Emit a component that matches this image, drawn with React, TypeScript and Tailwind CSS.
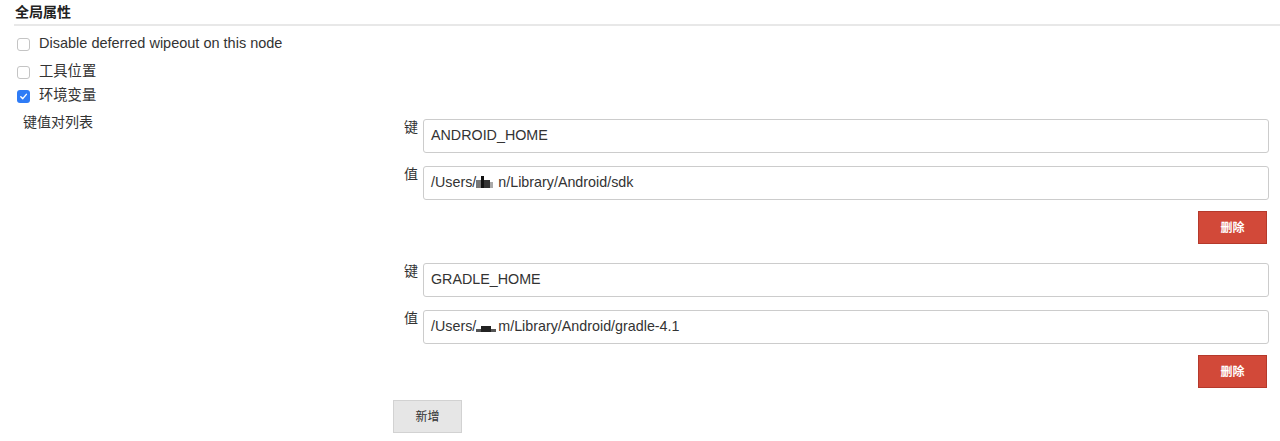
const font = { fontFamily: '"Liberation Sans", "Noto Sans CJK SC", sans-serif' };

const Checkbox = ({ checked }: { checked?: boolean }) =>
    checked ? (
        <span className="inline-flex items-center justify-center w-[13px] h-[13px] rounded-[3px] bg-[#2f7cf6]">
            <svg width="9" height="9" viewBox="0 0 10 10" fill="none">
                <path d="M2 5.2 L4.2 7.4 L8.2 2.6" stroke="white" strokeWidth="1.6" strokeLinecap="round" strokeLinejoin="round" />
            </svg>
        </span>
    ) : (
        <span className="inline-block w-[13px] h-[13px] rounded-[3px] border border-[#c4c4c4] bg-white" />
    );

const Redacted = ({ wide }: { wide?: boolean }) =>
    wide ? (
        <span className="inline-flex items-end h-[12px] w-[20px] mr-[2px] align-[-1px]">
            <span className="w-[5px] h-[3px] bg-[#555]" />
            <span className="w-[10px] h-[6px] bg-[#222]" />
            <span className="w-[5px] h-[3px] bg-[#555]" />
        </span>
    ) : (
        <span className="inline-flex items-end h-[12px] w-[20px] mr-[2px] align-[-1px]">
            <span className="w-[5px] h-[8px] bg-[#777]" />
            <span className="w-[3px] h-[12px] bg-[#111]" />
            <span className="w-[6px] h-[8px] bg-[#333]" />
            <span className="w-[3px] h-[6px] bg-[#aaa]" />
        </span>
    );

const Field = ({ label, children }: { label: string; children: React.ReactNode }) => (
    <div className="flex">
        <div className="w-[30px] pr-[5px] text-right text-[14px] leading-[16px] text-[#333]">{label}</div>
        <div className="flex-1 h-[34px] border border-[#ccc] rounded-[3px] bg-white px-[7px] flex items-center text-[14.3px] text-[#333]">
            {children}
        </div>
    </div>
);

const Entry = ({ name, value }: { name: string; value: React.ReactNode }) => (
    <div className="flex flex-col">
        <Field label="键">{name}</Field>
        <div className="mt-[13px]">
            <Field label="值">{value}</Field>
        </div>
        <div className="flex justify-end mt-[11px] pr-[2px]">
            <button className="w-[69px] h-[33px] bg-[#d24939] border border-[#b5392b] text-white text-[12px] font-bold">
                删除
            </button>
        </div>
    </div>
);

export default function App() {
    return (
        <div className="w-[1280px] h-[441px] bg-white overflow-hidden" style={font}>
            <div className="ml-[14px] h-[26px] border-b-2 border-[#e8e8e8]">
                <div className="pl-[1px] text-[14px] leading-[24px] font-bold text-[#222]">全局属性</div>
            </div>

            <div className="flex items-center h-[20px] mt-[8px] pl-[17px] gap-[9px] text-[14.5px] text-[#333]">
                <Checkbox />
                <span>Disable deferred wipeout on this node</span>
            </div>
            <div className="flex items-center h-[20px] mt-[8px] pl-[17px] gap-[9px] text-[14.3px] text-[#333]">
                <Checkbox />
                <span>工具位置</span>
            </div>
            <div className="flex items-center h-[20px] mt-[4px] pl-[17px] gap-[9px] text-[14.3px] text-[#333]">
                <Checkbox checked />
                <span>环境变量</span>
            </div>

            <div className="flex mt-[6px]">
                <div className="w-[393px] pl-[23px] text-[14px] leading-[20px] text-[#333]">键值对列表</div>
                <div className="flex-1 pt-[7px] pr-[11px]">
                    <Entry name="ANDROID_HOME" value={<span>/Users/<Redacted />n/Library/Android/sdk</span>} />
                    <div className="mt-[19px]">
                        <Entry name="GRADLE_HOME" value={<span>/Users/<Redacted wide />m/Library/Android/gradle-4.1</span>} />
                    </div>
                    <div className="mt-[12px]">
                        <button className="w-[69px] h-[33px] bg-[#e6e6e6] border border-[#d2d2d2] text-[#333] text-[12px]">
                            新增
                        </button>
                    </div>
                </div>
            </div>
        </div>
    );
}
